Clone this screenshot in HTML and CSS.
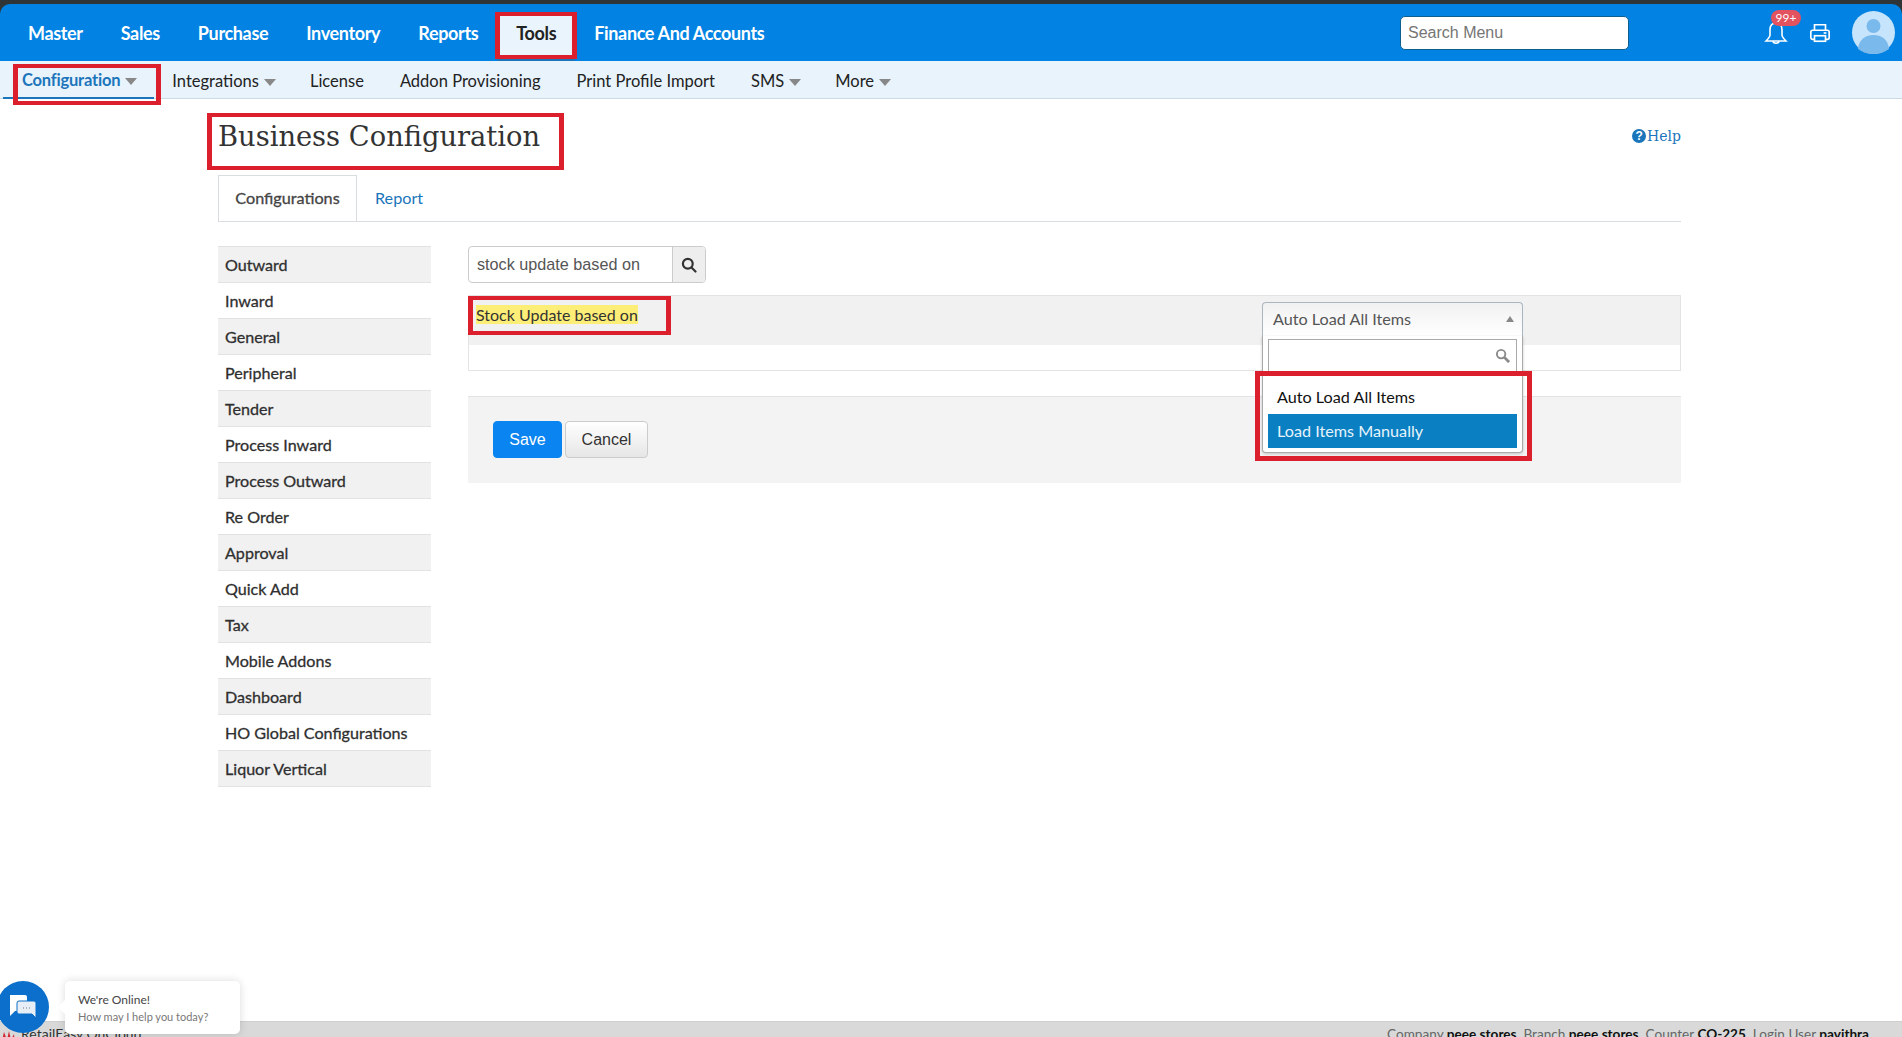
FILE: index.html
```html
<!DOCTYPE html>
<html lang="en">
<head>
<meta charset="utf-8">
<title>Business Configuration</title>
<link rel="stylesheet" href="styles.css">
</head>
<body>
<div class="page">
  <header class="topnav">
    <nav class="topnav-menu">
      <a class="topnav-item">Master</a>
      <a class="topnav-item">Sales</a>
      <a class="topnav-item">Purchase</a>
      <a class="topnav-item">Inventory</a>
      <a class="topnav-item">Reports</a>
      <a class="topnav-item is-active">Tools<span class="mark mark-tools"></span></a>
      <a class="topnav-item">Finance And Accounts</a>
    </nav>
    <div class="search-menu">Search Menu</div>
    <div class="top-icons">
      <span class="bell">
        <svg width="24" height="28" viewBox="0 0 24 28" fill="none" stroke="#fff" stroke-width="1.6"><path d="M12 4c-4 0-6 3-6 7v5c0 2-2 4-4 6h20c-2-2-4-4-4-6v-5c0-4-2-7-6-7z"/><path d="M9 22c0 3 6 3 6 0"/></svg>
        <span class="badge">99+</span>
      </span>
      <svg class="printer" width="22" height="22" viewBox="0 0 24 24" fill="none" stroke="#fff" stroke-width="1.8"><path d="M6 9V3h12v6"/><rect x="2" y="9" width="20" height="10" rx="2"/><rect x="6" y="15" width="12" height="6" fill="#0283e3"/><path d="M16 12h3"/></svg>
      <svg class="avatar" width="43" height="43" viewBox="0 0 43 43"><circle cx="21.5" cy="21.5" r="21.5" fill="#c6e4fb"/><circle cx="21.5" cy="15" r="7" fill="#7ab9ec"/><path d="M6 38c1-10 8-14 15.500-14S36 28 37 38c-4 3-9 5-15.500 5S10 41 6 38z" fill="#7ab9ec"/></svg>
    </div>
  </header>

  <nav class="subnav">
    <a class="subnav-item is-active">Configuration<i class="caret"></i><span class="mark mark-config"></span></a>
    <a class="subnav-item">Integrations<i class="caret"></i></a>
    <a class="subnav-item">License</a>
    <a class="subnav-item">Addon Provisioning</a>
    <a class="subnav-item">Print Profile Import</a>
    <a class="subnav-item">SMS<i class="caret"></i></a>
    <a class="subnav-item">More<i class="caret"></i></a>
  </nav>

  <main class="main">
    <div class="title-row">
      <h1 class="title">Business Configuration<span class="mark mark-title"></span></h1>
      <a class="help"><span class="help-icon">?</span>Help</a>
    </div>

    <div class="tabs">
      <a class="tab is-active">Configurations</a>
      <a class="tab">Report</a>
    </div>

    <div class="content">
      <ul class="side">
        <li>Outward</li>
        <li>Inward</li>
        <li>General</li>
        <li>Peripheral</li>
        <li>Tender</li>
        <li>Process Inward</li>
        <li>Process Outward</li>
        <li>Re Order</li>
        <li>Approval</li>
        <li>Quick Add</li>
        <li>Tax</li>
        <li>Mobile Addons</li>
        <li>Dashboard</li>
        <li>HO Global Configurations</li>
        <li>Liquor Vertical</li>
      </ul>

      <section class="panel">
        <div class="filter">
          <div class="filter-input">stock update based on</div>
          <div class="filter-btn">
            <svg width="16" height="16" viewBox="0 0 16 16" fill="none" stroke="#333" stroke-width="2.200"><circle cx="6.800" cy="6.800" r="4.900"/><path d="M10.500 10.500l4 4" stroke-linecap="round"/></svg>
          </div>
        </div>

        <div class="setting">
          <div class="setting-head">
            <span class="setting-label"><mark class="hl">Stock Update based on</mark><span class="mark mark-stock"></span></span>
            <div class="select">
              <div class="select-head">Auto Load All Items<i class="select-arrow"></i></div>
              <div class="select-drop">
                <div class="select-search">
                  <svg width="15" height="15" viewBox="0 0 16 16" fill="none" stroke="#8a8a8a" stroke-width="2"><circle cx="6.500" cy="6.500" r="4.500"/><path d="M10 10l5 5" stroke-width="3"/></svg>
                </div>
                <div class="option">Auto Load All Items</div>
                <div class="option is-selected">Load Items Manually</div>
              </div>
              <span class="mark mark-drop"></span>
            </div>
          </div>
          <div class="setting-body"></div>
        </div>

        <div class="actions">
          <button class="btn btn-save">Save</button>
          <button class="btn btn-cancel">Cancel</button>
        </div>
      </section>
    </div>
  </main>

  <footer class="footer">
    <span class="brand">
      <svg width="16" height="16" viewBox="0 0 16 16"><path d="M1 16L4 3l3 8 2-9 2 9 3-6 1 11z" fill="#d22630"/></svg>
      RetailEasy OnCloud
    </span>
    <span class="footer-info">Company <b>peee stores</b>&nbsp; Branch <b>peee stores</b>&nbsp; Counter <b>CO-225</b>&nbsp; Login User <b>pavithra</b></span>
  </footer>

  <aside class="chat">
    <span class="chat-btn">
      <svg width="30" height="26" viewBox="0 0 30 26"><path d="M2 1h15a2 2 0 0 1 2 2v12a2 2 0 0 1-2 2H7l-5 5V3z" fill="#fff"/><path d="M11 7h15a2 2 0 0 1 2 2v10v5l-4-4H11a2 2 0 0 1-2-2V9a2 2 0 0 1 2-2z" fill="#e8eef6" stroke="#0b6fcb" stroke-width="1"/><path d="M15 14h1m2 0h1m2 0h1" stroke="#6a7a8a" stroke-width="1.200"/></svg>
    </span>
    <div class="chat-bubble">
      <div class="chat-title">We're Online!</div>
      <div class="chat-sub">How may I help you today?</div>
    </div>
  </aside>
</div>
</body>
</html>
```
FILE: styles.css
```css
* { box-sizing: border-box; }
html, body { margin: 0; padding: 0; height: 100%; }
body { font-family: "Lato", "Liberation Sans", sans-serif; color: #333; background: #2f3437; overflow: hidden; }
a { text-decoration: none; }

.page { position: relative; height: 1037px; overflow: hidden; padding-top: 4px; display: flex; flex-direction: column; }

.mark { position: absolute; border-style: solid; border-color: #dc1f2c; border-width: 4px 5px; pointer-events: none; }
.mark-tools { left: -2px; right: -2px; top: -4px; bottom: -1px; }
.mark-config { left: 10px; right: -7px; top: 3px; bottom: -8px; }
.mark-title { left: -11px; top: -8px; width: 357px; height: 57px; }
.mark-stock { left: 0; top: 0; right: 0; bottom: 0; }
.mark-drop { left: -7px; right: -9px; top: 69px; height: 90px; border-width: 5px; }

.topnav { flex: none; height: 57px; background: #0283e3; border-radius: 10px 10px 0 0; display: flex; align-items: center; padding: 0 7px 0 9px; color: #fff; }
.topnav-menu { flex: 1; display: flex; align-self: stretch; padding-top: 12px; }
.topnav-item { position: relative; display: flex; align-items: center; padding: 0 19px 11px; font-size: 18px; font-weight: 700; letter-spacing: -0.35px; color: #fff; white-space: nowrap; }
.topnav-item.is-active { background: #eaf4fc; color: #222; border-bottom: 3px solid #1b75bb; padding-bottom: 8px; }

.search-menu { flex: none; width: 229px; height: 34px; background: #fff; border: 1px solid #0e5f8e; border-radius: 5px; padding: 0 7px; display: flex; align-items: center; font: 16px "Liberation Sans", sans-serif; color: #757575; }

.top-icons { flex: none; display: flex; align-items: center; margin-left: 135px; }
.bell { position: relative; display: flex; width: 24px; height: 28px; }
.badge { position: absolute; left: 7px; top: -9px; width: 30px; height: 16px; border-radius: 8px; background: #e2525f; color: #fff; font-size: 12px; line-height: 16px; text-align: center; }
.printer { margin-left: 21px; }
.avatar { margin-left: 21px; }

.subnav { flex: none; height: 38px; background: #e8f3fc; border-bottom: 1px solid #cbdbe6; display: flex; align-items: stretch; padding-left: 3px; }
.subnav-item { position: relative; display: flex; align-items: center; padding: 2px 18px 0; font-size: 16.5px; color: #222; white-space: nowrap; }
.subnav-item.is-active { color: #1b75bb; font-weight: 700; letter-spacing: -0.2px; border-bottom: 2px solid #1b75bb; padding: 1px 17px 0 19px; margin-bottom: -1px; }
.caret { display: inline-block; margin: 3px -2px 0 5px; border-left: 6px solid transparent; border-right: 6px solid transparent; border-top: 7px solid #888; }
.subnav-item.is-active .caret { margin-right: 0; }

.main { flex: 1; min-height: 0; background: #fff; padding: 0 221px 0 218px; }
.title-row { height: 76px; display: flex; justify-content: space-between; align-items: flex-start; }
.title { position: relative; margin: 22px 0 0; font: 400 27.3px/32px "DejaVu Serif", serif; color: #333; }
.help { display: flex; align-items: center; gap: 1px; margin-top: 27px; font: 14px/20px "DejaVu Serif", serif; color: #1b75bb; }
.help-icon { width: 14px; height: 14px; border-radius: 50%; background: #1b75bb; color: #fff; font: 700 12px/14px "Liberation Sans", sans-serif; text-align: center; }

.tabs { display: flex; height: 47px; border-bottom: 1px solid #d8dde0; }
.tab { display: flex; align-items: center; height: 46px; padding: 0 17px 2px 18px; font-size: 16.2px; color: #1b75bb; }
.tab.is-active { width: 139px; padding: 0 0 2px; justify-content: center; color: #444; -webkit-text-stroke: 0.3px #444; background: #fff; border: 1px solid #d8dde0; border-bottom: 0; }

.content { display: flex; gap: 37px; padding-top: 24px; }
.side { flex: none; width: 213px; margin: 0; padding: 0; list-style: none; border-top: 1px solid #e2e2e2; }
.side li { height: 36px; padding-left: 7px; display: flex; align-items: center; font-size: 16.1px; color: #2f2f2f; -webkit-text-stroke: 0.3px #2f2f2f; border-bottom: 1px solid #e2e2e2; }
.side li:nth-child(odd) { background: #f1f1f1; }

.panel { flex: 1; min-width: 0; }
.filter { display: flex; width: 238px; height: 37px; border: 1px solid #ccc; border-radius: 4px; overflow: hidden; }
.filter-input { flex: 1; padding: 0 8px; display: flex; align-items: center; font: 16.2px "Liberation Sans", sans-serif; color: #555; }
.filter-btn { flex: none; width: 33px; display: flex; align-items: center; justify-content: center; background: #eee; border-left: 1px solid #ccc; }

.setting { margin-top: 12px; height: 76px; border: 1px solid #e4e4e4; }
.setting-head { height: 49px; background: #f1f1f1; display: flex; position: relative; }
.setting-label { position: relative; align-self: flex-start; width: 203px; height: 39px; margin-left: -1px; padding: 9px 8px 0; display: block; font-size: 16px; color: #333; }
.hl { background: #fdee78; color: #333; line-height: 19px; display: inline-block; }

.select { position: absolute; left: 793px; top: 6px; width: 261px; }
.select-head { height: 34px; padding: 0 8px 2px 10px; display: flex; align-items: center; justify-content: space-between; font-size: 16.2px; color: #555; background: linear-gradient(#f1f1f1, #fff); border: 1px solid #a9b6c2; border-bottom: 0; border-radius: 4px 4px 0 0; }
.select-arrow { border-left: 4px solid transparent; border-right: 4px solid transparent; border-bottom: 6px solid #888; }
.select-drop { position: relative; height: 117px; background: #fff; border: 1px solid #aaa; border-top: 0; border-radius: 0 0 4px 4px; box-shadow: 0 1px 3px rgba(0,0,0,.2); padding: 3px 5px 0; }
.select-search { height: 32px; margin-bottom: 9px; border: 1px solid #aaa; border-bottom: 0; display: flex; align-items: center; justify-content: flex-end; padding-right: 6px; }
.option { height: 34px; padding: 0 0 2px 9px; display: flex; align-items: center; font-size: 16.2px; color: #111; }
.option.is-selected { background: #0a80c2; color: #e6f3fc; }

.actions { margin-top: 25px; height: 87px; background: #f3f3f3; border-top: 1px solid #e4e4e4; padding: 24px 0 0 25px; display: flex; gap: 3px; align-items: flex-start; }
.btn { height: 37px; border-radius: 4px; font: 16px "Liberation Sans", sans-serif; padding: 0; }
.btn-save { width: 69px; background: #0a84f0; color: #fff; border: 1px solid #0a84f0; }
.btn-cancel { width: 83px; background: linear-gradient(#fff, #e6e6e6); color: #333; border: 1px solid #ccc; }

.footer { flex: none; height: 16px; background: #d9d9d9; border-top: 1px solid #cfcfcf; display: flex; justify-content: space-between; padding: 0 33px 0 0; font-size: 13.6px; line-height: 24px; color: #666; overflow: hidden; white-space: nowrap; }
.brand { display: flex; gap: 5px; color: #333; font-size: 14px; }
.brand svg { margin-top: 7px; }
.footer-info b { font-weight: 700; color: #111; }

.chat { position: absolute; left: -3px; top: 981px; display: flex; gap: 16px; align-items: flex-start; }
.chat-btn { width: 52px; height: 52px; border-radius: 50%; background: #0b6fcb; display: flex; align-items: center; justify-content: center; }
.chat-bubble { position: relative; width: 175px; height: 53px; background: #fff; border-radius: 5px; box-shadow: 0 0 8px rgba(0,0,0,.15); padding: 10px 13px; }
.chat-bubble::before { content: ""; position: absolute; left: -5px; top: 21px; width: 10px; height: 10px; background: #fff; transform: rotate(45deg); }
.chat-title { font-size: 12px; line-height: 17px; color: #444; }
.chat-sub { font-size: 11px; line-height: 17px; color: #777; }
```
